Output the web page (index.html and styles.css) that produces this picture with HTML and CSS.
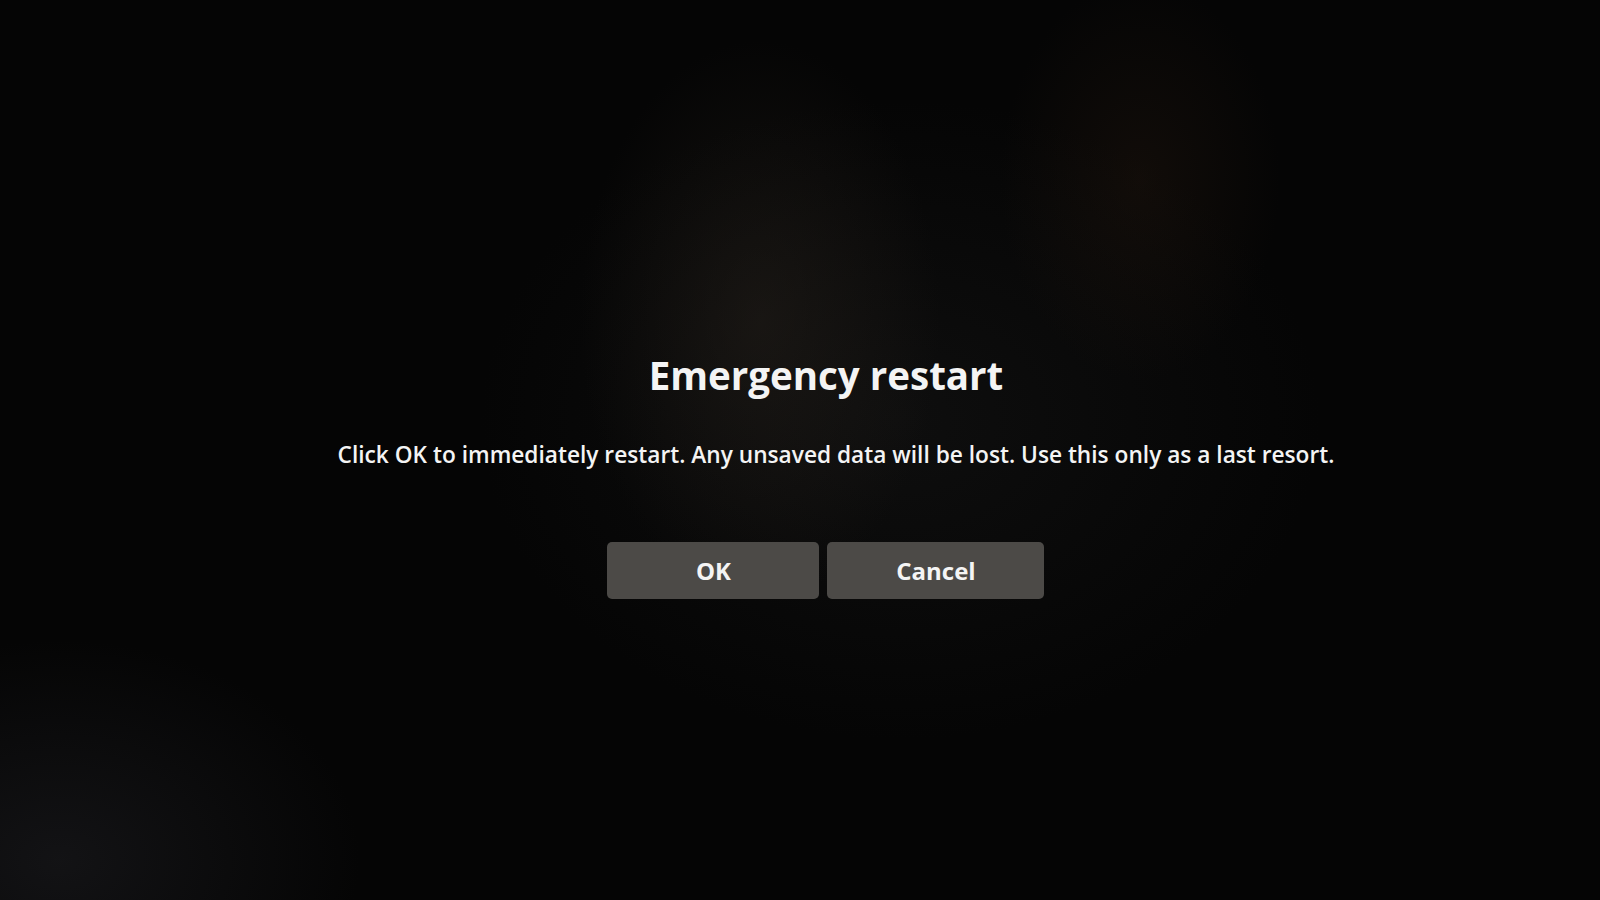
FILE: index.html
```html
<!DOCTYPE html>
<html lang="en">
  <head>
    <meta charset="UTF-8" />
    <meta name="viewport" content="width=device-width, initial-scale=1.0" />
    <title>Emergency restart</title>
    <link rel="stylesheet" href="styles.css">
  </head>
  <body>
    <div class="screen">
      <div class="dialog">
        <h1 class="title">Emergency restart</h1>
        <p class="message">Click OK to immediately restart. Any unsaved data will be lost. Use this only as a last resort.</p>
        <div class="actions">
          <button class="btn btn-ok">OK</button>
          <button class="btn btn-cancel">Cancel</button>
        </div>
      </div>
    </div>
  </body>
</html>
```

FILE: styles.css
```css
html, body{
  margin: 0;
  height: 100%;
}
body{
  background-color: #050505;
  font-family: "Open Sans", "Noto Sans", sans-serif;
  color: #f4f4f4;
}
/* dark lock screen with a faint blurred wallpaper behind */
.screen{
  height: 900px;
  display: flex;
  justify-content: center;
  background:
    radial-gradient(ellipse 180px 280px at 760px 320px, rgba(42, 36, 30, 0.45), transparent),
    radial-gradient(ellipse 140px 200px at 1140px 180px, rgba(40, 26, 16, 0.35), transparent),
    radial-gradient(ellipse 300px 220px at 60px 860px, rgba(30, 30, 34, 0.55), transparent),
    radial-gradient(ellipse 420px 320px at 900px 420px, rgba(20, 20, 20, 0.6), transparent),
    #050505;
}
/* title, message and buttons */
.dialog{
  display: flex;
  flex-direction: column;
  align-items: center;
  padding-top: 351px;
  padding-left: 52px;
}
.title{
  margin: 0;
  font-size: 38.5px;
  font-weight: 700;
  line-height: 48px;
}
.message{
  margin: 41px 0 0 20px;
  font-size: 22.7px;
  font-weight: 600;
  line-height: 30px;
}
.actions{
  display: flex;
  gap: 8px;
  margin-top: 72px;
}
.btn{
  width: 212px;
  height: 57px;
  border: none;
  border-radius: 5px;
  background-color: #4c4a47;
  color: #f4f4f4;
  font-family: inherit;
  font-size: 24px;
  font-weight: 700;
  cursor: pointer;
}
.btn-cancel{
  width: 217px;
}
```
